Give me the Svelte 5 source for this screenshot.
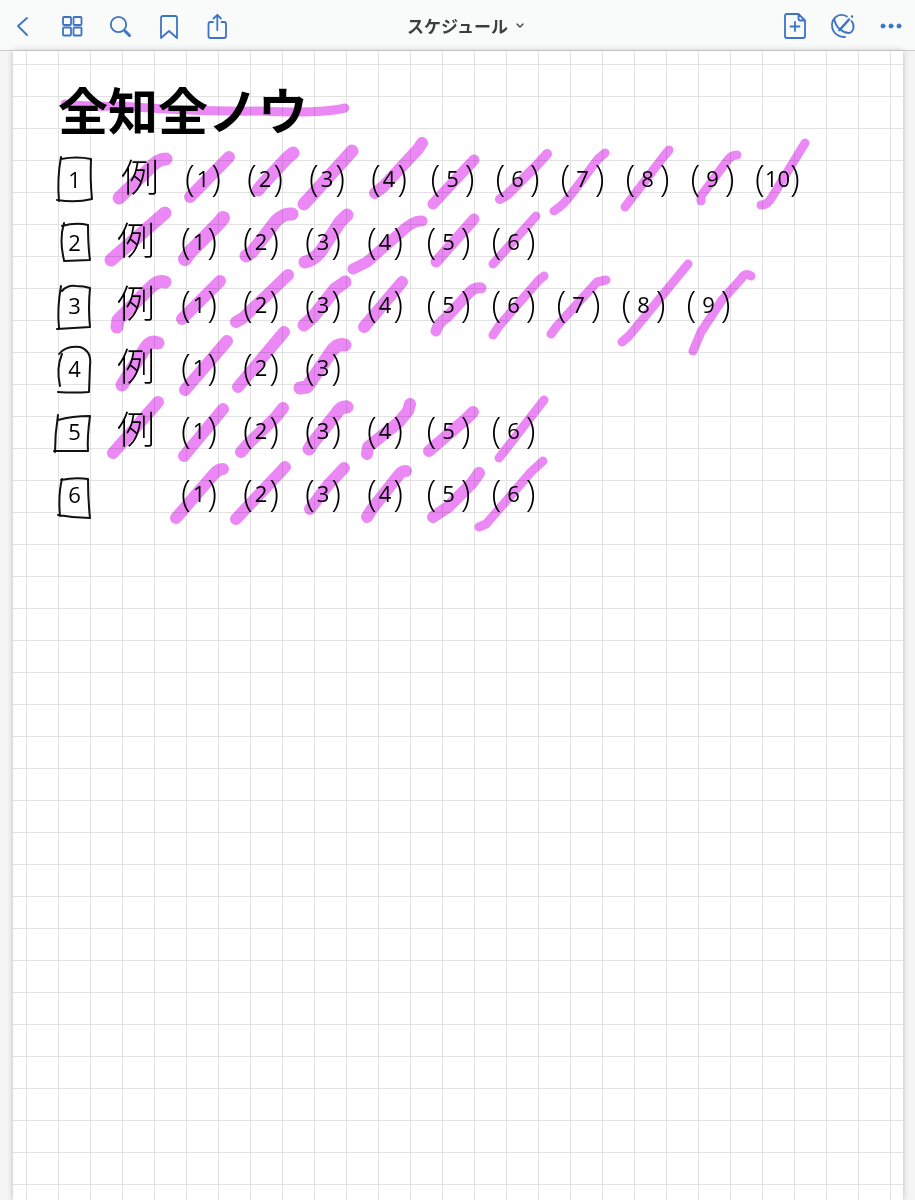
<script>
  const range = (n) => Array.from({ length: n }, (_, i) => i + 1);

  const rows = [
    { no: 1, example: true, count: 10, box: 'M61 159Q77 156 91 159Q90 180 92 199Q76 203 57 200M61 157Q57 178 59 201' },
    { no: 2, example: true, count: 6, box: 'M62 226Q76 222 88 225Q88 246 90 260L64 261M64 223Q59 240 64 260' },
    { no: 3, example: true, count: 9, box: 'M62 291Q67 285 76 286Q84 286 90 288Q88 308 90 327L57 329M61 286Q57 308 59 328' },
    { no: 4, example: true, count: 3, box: 'M59 354Q66 345 80 347Q92 351 90 365L89 392Q74 393 58 392M62 354Q56 368 60 386' },
    { no: 5, example: true, count: 6, box: 'M58 420Q72 416 90 416Q87 438 88 451L54 451M58 415Q55 434 55 452' },
    { no: 6, example: false, count: 6, box: 'M61 480Q75 477 88 479Q88 500 90 518Q74 518 58 515M62 479Q58 495 60 516' }
  ];

  // Highlighter strokes: width and path, in page coordinates
  const marks = [
    [9, 'M65 104Q90 107 120 106Q200 112 260 111Q320 114 345 108'],
    [13, 'M119 198L148 170Q157 159 166 159'],
    [12, 'M190 197L229 157'],
    [13, 'M258 190L262 185L287 158L293 153'],
    [13, 'M304 204L352 151'],
    [12, 'M375 193L383 187L418 149L422 143'],
    [11, 'M433 204L474 160'],
    [10, 'M500 199L507 195L537 165L547 154'],
    [9, 'M554 211Q564 205 573 192L598 159L605 153'],
    [9, 'M625 207L664 156L669 150'],
    [9, 'M701 201L701 196L727 161Q731 155 737 155'],
    [9, 'M761 205Q768 205 772 197L805 143'],
    [13, 'M111 260L165 213'],
    [14, 'M185 259L190 252L218 224L223 218'],
    [13, 'M246 256L252 252L276 221Q284 213 292 214'],
    [13, 'M305 262Q314 260 321 251L340 222L347 215'],
    [11, 'M353 269L367 262L400 233Q413 220 422 221'],
    [11, 'M436 262L474 219'],
    [9, 'M493 264L536 216'],
    [13, 'M117 327L118 320L151 287Q158 280 165 282'],
    [12, 'M182 319L220 281'],
    [12, 'M236 322L243 318L288 275'],
    [13, 'M304 325L313 317L335 289L345 282'],
    [12, 'M364 327L370 320L402 282'],
    [11, 'M436 331Q438 323 447 317L469 293Q474 287 481 288'],
    [9, 'M493 335L499 326L539 280L544 276'],
    [9, 'M551 334L557 326L597 282L606 280'],
    [9, 'M622 342L629 336L688 264'],
    [9, 'M693 351L701 332L722 300L741 279Q745 272 751 276'],
    [13, 'M122 385L146 347Q151 340 158 343'],
    [12, 'M185 390L227 341'],
    [12, 'M238 387L284 332'],
    [13, 'M300 388L307 387L331 352Q337 343 345 345'],
    [12, 'M113 453L158 402'],
    [12, 'M184 456L223 409'],
    [12, 'M241 452L248 444L275 418L283 408'],
    [13, 'M309 449L312 444L336 414Q341 406 347 407'],
    [12, 'M367 454L368 447L399 422L408 411L410 404'],
    [12, 'M429 451L466 419L473 412'],
    [9, 'M499 458L544 400'],
    [12, 'M176 518L214 474Q218 469 223 469'],
    [12, 'M236 519L285 467'],
    [12, 'M310 509L328 485L344 468'],
    [12, 'M367 517L372 509L398 476Q401 471 406 471'],
    [12, 'M433 517L448 507L472 483L479 473'],
    [9, 'M479 527L486 524L507 500L531 472L543 461']
  ];
</script>

<div class="app">
  <header>
    <nav aria-label="Document">
      <button aria-label="Back"><svg viewBox="0 0 32 32"><path d="M19 9L10 17L19 26" /></svg></button>
      <button aria-label="Pages">
        <svg viewBox="0 0 32 32"><rect x="7" y="8" width="8" height="8" rx="1" /><rect x="17.500" y="8" width="8" height="8" rx="1" /><rect x="7" y="18.500" width="8" height="8" rx="1" /><rect x="17.500" y="18.500" width="8" height="8" rx="1" /></svg>
      </button>
      <button aria-label="Search"><svg viewBox="0 0 32 32"><circle cx="14.500" cy="15.500" r="7.700" /><path class="thick" d="M21 22L25.500 26.500" /></svg></button>
      <button aria-label="Bookmark"><svg viewBox="0 0 32 32"><path d="M9 29V9Q9 7 11 7H23Q25 7 25 9V29L17 22Z" /></svg></button>
      <button aria-label="Share"><svg viewBox="0 0 32 32"><path d="M13 13H10.500Q8.500 13 8.500 15V27Q8.500 29 10.500 29H24Q26 29 26 27V15Q26 13 24 13H21.500M17.300 21V6M13.500 9.500L17.300 6L21 9.500" /></svg></button>
    </nav>
    <button class="title"><span>スケジュール</span><svg viewBox="0 0 8 8"><path d="M1 2L4 5L7 2" /></svg></button>
    <nav class="tools" aria-label="Tools">
      <button aria-label="Add page"><svg viewBox="0 0 32 32"><path d="M19.500 5H8Q6 5 6 7V27Q6 29 8 29H24Q26 29 26 27V11.500ZM19.500 5V9.500Q19.500 11.500 21.500 11.500H26M16 13V22M11.500 17.500H20.500" /></svg></button>
      <button aria-label="Read only mode">
        <svg viewBox="0 0 32 32"><path d="M20 7.500C12 3 5 9 5 16C5 23 10 28 18 28M7.500 11C9 19 16 24 22 24C27 23 28 16 24.500 12" /><path class="pen" d="M13.500 20L22 10.500M25 7.500V7.500" /><path d="M12 21.500L14 20" /></svg>
      </button>
      <button aria-label="More"><svg class="dots" viewBox="0 0 32 32"><circle cx="8" cy="17" r="2" /><circle cx="16" cy="17" r="2" /><circle cx="24" cy="17" r="2" /></svg></button>
    </nav>
  </header>

  <main>
    <svg class="ink" aria-hidden="true">
      <g transform="translate(-13 -51)">
        {#each marks as [width, d]}<path class="mark" stroke-width={width} {d} />{/each}
        {#each rows as row}<path class="box" d={row.box} />{/each}
      </g>
    </svg>
    <h1>全知全ノウ</h1>
    <ol>
      {#each rows as row}
        <li>
          <span class="no">{row.no}</span>
          <span class="example">{row.example ? '例' : ''}</span>
          {#each range(row.count) as n}
            <span class="item" class:wide={n > 4} class:tight={n > 9}><i>(</i><b>{n}</b><i>)</i></span>
          {/each}
        </li>
      {/each}
    </ol>
  </main>
</div>

<style>
  :global(body) { margin: 0; background: #f5f5f5; }
  .app { display: flex; flex-direction: column; min-height: 100vh; font-family: "Noto Sans CJK JP", sans-serif; }
  header {
    display: grid; grid-template-columns: 1fr auto 1fr; align-items: center;
    box-sizing: border-box; height: 51px; padding: 0 8px;
    background: #f9fafa; border-bottom: 1px solid #c9c9c9; position: relative;
  }
  nav { display: flex; gap: 16px; }
  .tools { justify-content: flex-end; }
  button { border: 0; padding: 0; background: none; color: #3c73c4; font: inherit; cursor: pointer; }
  nav button { width: 32px; height: 32px; }
  header svg { display: block; fill: none; stroke: currentColor; stroke-width: 1.8; stroke-linecap: round; stroke-linejoin: round; }
  nav svg { width: 32px; height: 32px; }
  header .thick { stroke-width: 3; }
  header .pen { stroke-width: 2.5; }
  header .dots { fill: currentColor; stroke-width: 1; }
  .title { display: flex; align-items: center; gap: 8px; padding: 2px 0 0 16px; color: #3d3d3d; font-size: 17px; font-weight: 700; line-height: 24px; }
  .title svg { width: 8px; height: 8px; stroke-width: 1.3; }
  main {
    position: relative; flex: 1; margin: 0 12px 0 13px; padding: 18px 0 0 45px; overflow: hidden;
    background: linear-gradient(#e2e2e2 1px, transparent 1px) 0 13px / 32px 32px, linear-gradient(90deg, #e2e2e2 1px, transparent 1px) 13px 0 / 32px 32px, #fff;
    box-shadow: 0 0 6px #bbb;
  }
  .ink { position: absolute; inset: 0; width: 100%; height: 100%; fill: none; stroke-linecap: round; stroke-linejoin: round; }
  .mark { stroke: #ec88f5; mix-blend-mode: multiply; }
  .box { stroke: #111; stroke-width: 2; }
  h1, ol { position: relative; margin: 0; padding: 0; color: #000; }
  h1 { font-size: 50px; font-weight: 700; line-height: 78px; white-space: nowrap; }
  ol { list-style: none; }
  li { display: flex; align-items: center; height: 63px; }
  .no { width: 33px; text-align: center; font: 400 22px/32px "Open Sans", sans-serif; }
  .example { width: 64px; padding-left: 13px; padding-bottom: 8px; text-align: center; font-size: 38px; font-weight: 300; line-height: 40px; }
  .item { display: flex; align-items: center; justify-content: center; width: 62px; padding-bottom: 2px; }
  .item.wide { width: 65px; }
  .item i { font: 300 36px/40px "Open Sans", sans-serif; }
  .item b { padding: 0 2px; font: 400 22px/40px "Open Sans", sans-serif; }
  .item.wide b { padding: 0 6px; }
  .item.wide.tight b { padding: 0; }
  li:first-child .example { padding-left: 17px; }
</style>
